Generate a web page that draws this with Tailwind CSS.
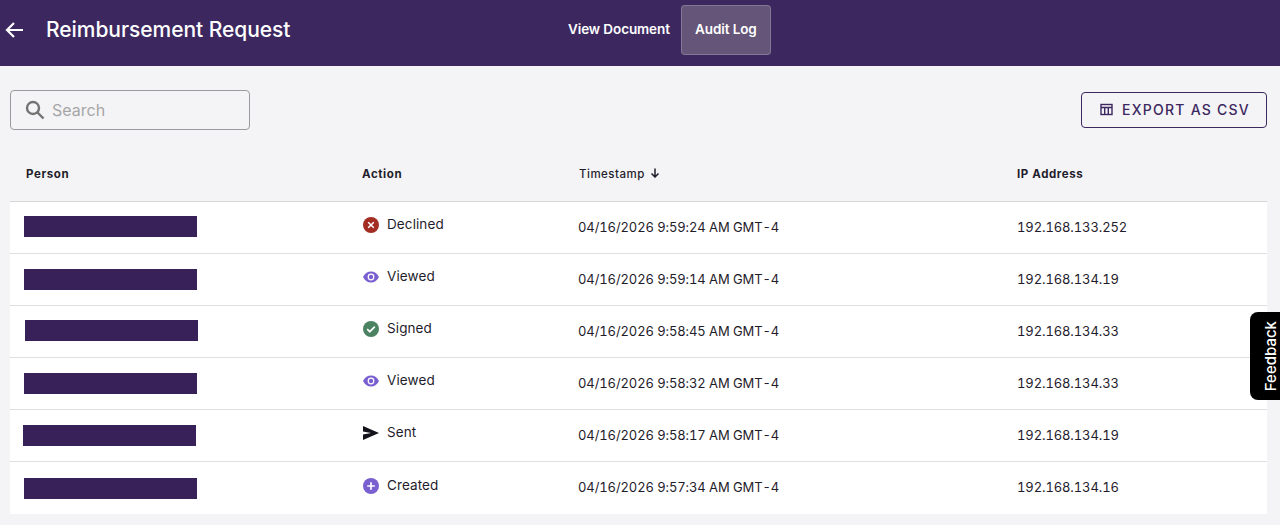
<!DOCTYPE html>
<html lang="en">
<head>
    <meta charset="UTF-8">
    <title>Reimbursement Request</title>
    <script src="https://cdn.jsdelivr.net/npm/@tailwindcss/browser@4"></script>
</head>
<body class="relative h-[525px] w-[1280px] overflow-hidden bg-[#f4f4f6] font-['Inter',sans-serif] text-[#1f1c2b]">

    <!-- Top bar -->
    <header class="relative flex h-[66px] items-center bg-[#3c285f] pb-[6px] text-white">
        <svg class="ml-[5px] h-[18px] w-[18px]" viewBox="0 0 18 18" fill="none" stroke="white" stroke-width="2.200"><path d="M18 9H2M9 2L2 9l7 7"/></svg>
        <h1 class="ml-[23px] text-[21px] font-medium tracking-[-0.05px]">Reimbursement Request</h1>
        <nav class="absolute left-[553px] top-[5px] flex h-[50px] items-center text-[13.500px] font-semibold tracking-[-0.1px]">
            <a class="pb-[1px] pl-[15px] pr-[12px]">View Document</a>
            <a class="-ml-[1px] flex h-[50px] w-[90px] items-center justify-center rounded-[4px] border border-white/20 bg-[#645579] pb-[1px]">Audit Log</a>
        </nav>
    </header>

    <!-- Toolbar -->
    <div class="flex items-start justify-between pl-[10px] pr-[13px] pt-[24px]">
        <div class="flex h-[40px] w-[240px] items-center rounded-[4px] border border-[#9b9b9f] pl-[14px]">
            <svg class="h-[20px] w-[20px]" viewBox="0 0 20 20" fill="none" stroke="#737373" stroke-width="2.400"><circle cx="8" cy="8" r="6"/><path d="M12.500 12.500L18.500 18.500"/></svg>
            <span class="mb-[1px] ml-[7px] text-[16px] text-[#a6a6a6]">Search</span>
        </div>
        <button class="mt-[2px] flex h-[36px] w-[186px] items-center justify-center rounded-[4px] border border-[#3c285f] pb-[1px] pl-[2px] text-[14px] font-medium tracking-[1.250px] text-[#3c285f]">
            <svg class="mr-[9px] h-[13px] w-[13px]" viewBox="0 0 13 13" fill="none" stroke="#3c285f" stroke-width="1.400"><rect x="1" y="1.500" width="11" height="10"/><path d="M1 4.500h11M4.700 4.500v7M8.300 4.500v7"/></svg>
            EXPORT AS CSV
        </button>
    </div>

    <!-- Audit table -->
    <div class="ml-[10px] mt-[24px] w-[1257px]">
        <div class="grid h-[48px] grid-cols-[352px_216px_439px_1fr] border-b border-[#d6d6d9] pt-[12px] text-[11.500px] tracking-[0.600px]">
            <div class="pl-[16px] font-bold">Person</div>
            <div class="font-bold">Action</div>
            <div class="flex h-[18px] items-start pl-[1px] font-medium tracking-[0.500px]">Timestamp
                <svg class="ml-[5px] mt-[2px] h-[10px] w-[10px]" viewBox="0 0 10 10" fill="none" stroke="#1f1c2b" stroke-width="1.500"><path d="M5 0.500v8.500M1.500 5.500L5 9l3.500-3.500"/></svg>
            </div>
            <div class="font-bold">IP Address</div>
        </div>

        <div class="bg-white text-[13px] tabular-nums tracking-[-0.1px]">
            <div class="grid h-[52px] grid-cols-[352px_216px_439px_1fr] items-center border-b border-[#dfdfe1]">
                <div class="mb-[2px] ml-[14px] h-[21px] w-[173px] bg-[#372158]"></div>
                <div class="mb-[5px] flex items-center text-[13.500px] tracking-[0.1px]">
                    <svg class="ml-[1px] h-[16px] w-[16px]" viewBox="0 0 16 16"><circle cx="8" cy="8" r="8" fill="#a32d22"/><path d="M5.200 5.200l5.600 5.600M10.800 5.200l-5.600 5.600" stroke="white" stroke-width="1.500"/></svg>
                    <span class="ml-[8px] -translate-y-[1px]">Declined</span>
                </div>
                <div>04/16/2026 9:59:24 AM GMT-4</div>
                <div>192.168.133.252</div>
            </div>
            <div class="grid h-[52px] grid-cols-[352px_216px_439px_1fr] items-center border-b border-[#dfdfe1]">
                <div class="ml-[14px] h-[21px] w-[173px] bg-[#372158]"></div>
                <div class="mb-[5px] flex items-center text-[13.500px] tracking-[0.1px]">
                    <svg class="ml-[1px] h-[16px] w-[16px]" viewBox="0 0 16 16"><path d="M0 8c2-3.800 4.800-5.500 8-5.500s6 1.700 8 5.500c-2 3.800-4.800 5.500-8 5.500s-6-1.700-8-5.500z" fill="#7a5fd0"/><circle cx="8" cy="8" r="3.400" fill="white"/><circle cx="8" cy="8" r="2.200" fill="#7a5fd0"/></svg>
                    <span class="ml-[8px] -translate-y-[1px]">Viewed</span>
                </div>
                <div>04/16/2026 9:59:14 AM GMT-4</div>
                <div>192.168.134.19</div>
            </div>
            <div class="grid h-[52px] grid-cols-[352px_216px_439px_1fr] items-center border-b border-[#dfdfe1]">
                <div class="mb-[2px] ml-[15px] h-[21px] w-[173px] bg-[#372158]"></div>
                <div class="mb-[5px] flex items-center text-[13.500px] tracking-[0.1px]">
                    <svg class="ml-[1px] h-[16px] w-[16px]" viewBox="0 0 16 16"><circle cx="8" cy="8" r="8" fill="#4a8262"/><path d="M4.200 8.200l2.600 2.500 5-5" fill="none" stroke="white" stroke-width="1.700"/></svg>
                    <span class="ml-[8px] -translate-y-[1px]">Signed</span>
                </div>
                <div>04/16/2026 9:58:45 AM GMT-4</div>
                <div>192.168.134.33</div>
            </div>
            <div class="grid h-[52px] grid-cols-[352px_216px_439px_1fr] items-center border-b border-[#dfdfe1]">
                <div class="ml-[14px] h-[21px] w-[173px] bg-[#372158]"></div>
                <div class="mb-[5px] flex items-center text-[13.500px] tracking-[0.1px]">
                    <svg class="ml-[1px] h-[16px] w-[16px]" viewBox="0 0 16 16"><path d="M0 8c2-3.800 4.800-5.500 8-5.500s6 1.700 8 5.500c-2 3.800-4.800 5.500-8 5.500s-6-1.700-8-5.500z" fill="#7a5fd0"/><circle cx="8" cy="8" r="3.400" fill="white"/><circle cx="8" cy="8" r="2.200" fill="#7a5fd0"/></svg>
                    <span class="ml-[8px] -translate-y-[1px]">Viewed</span>
                </div>
                <div>04/16/2026 9:58:32 AM GMT-4</div>
                <div>192.168.134.33</div>
            </div>
            <div class="grid h-[52px] grid-cols-[352px_216px_439px_1fr] items-center border-b border-[#dfdfe1]">
                <div class="ml-[13px] h-[21px] w-[173px] bg-[#372158]"></div>
                <div class="mb-[5px] flex items-center text-[13.500px] tracking-[0.1px]">
                    <svg class="ml-[1px] h-[16px] w-[16px]" viewBox="0 0 16 16"><path d="M0 1l16 7-16 7 0-5.500 8-1.500-8-1.500z" fill="#14121a"/></svg>
                    <span class="ml-[8px] -translate-y-[1px]">Sent</span>
                </div>
                <div>04/16/2026 9:58:17 AM GMT-4</div>
                <div>192.168.134.19</div>
            </div>
            <div class="grid h-[52px] grid-cols-[352px_216px_439px_1fr] items-center">
                <div class="mt-[1px] ml-[14px] h-[21px] w-[173px] bg-[#372158]"></div>
                <div class="mb-[5px] flex items-center text-[13.500px] tracking-[0.1px]">
                    <svg class="ml-[1px] h-[16px] w-[16px]" viewBox="0 0 16 16"><circle cx="8" cy="8" r="8" fill="#7a5fd0"/><path d="M8 4.200v7.600M4.200 8h7.600" stroke="white" stroke-width="1.700"/></svg>
                    <span class="ml-[8px]">Created</span>
                </div>
                <div>04/16/2026 9:57:34 AM GMT-4</div>
                <div>192.168.134.16</div>
            </div>
        </div>
    </div>

    <!-- Feedback tab -->
    <div class="absolute left-[1250px] top-[312px] flex h-[88px] w-[40px] items-center rounded-l-[8px] bg-black">
        <span class="ml-[12px] rotate-180 text-[15px] font-medium leading-[18px] text-white [writing-mode:vertical-rl]">Feedback</span>
    </div>
</body>
</html>
